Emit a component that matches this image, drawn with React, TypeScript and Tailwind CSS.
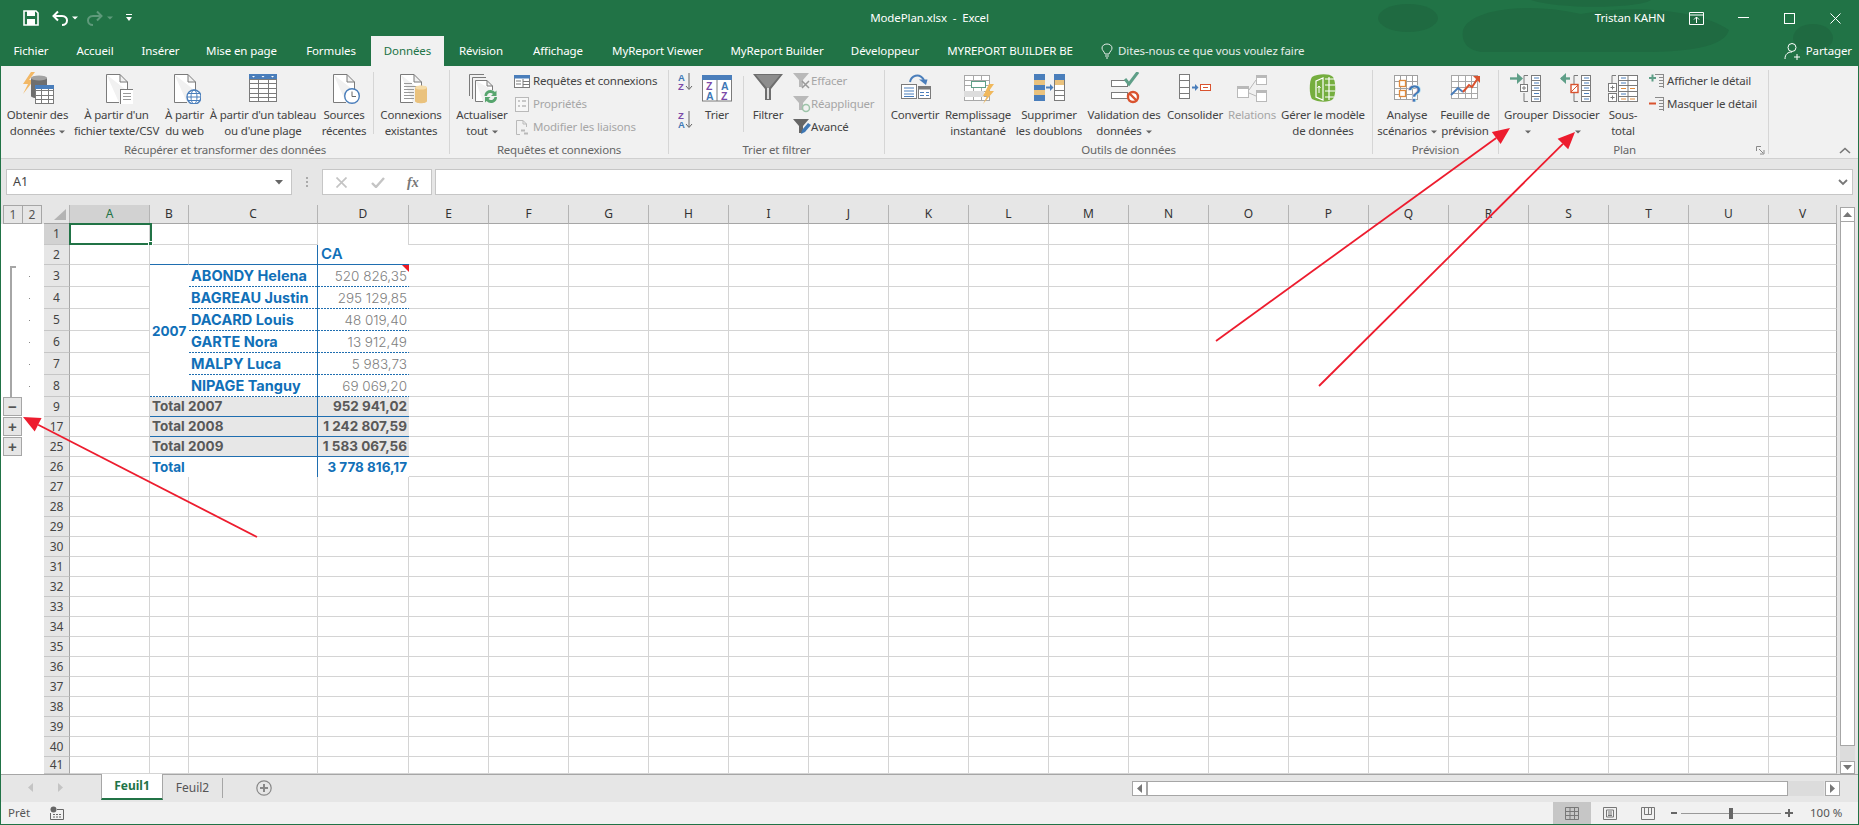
import React from "react";

const G = "#7b7b7b";
const B = "#4a7ebb";
const GOLD = "#eac27d";
const RED = "#d9532f";
const TEAL = "#5f9f88";
const DIM = "#b9b9b9";

const Svg = ({ s = 32, children }: { s?: number; children: React.ReactNode }) => (
  <svg width={s} height={s} viewBox={`0 0 ${s} ${s}`} className="shrink-0" fill="none">
    {children}
  </svg>
);

const Page = ({ c = G }: { c?: string }) => (
  <path d="M5.5 2.5H19L26.5 10V19M5.5 2.5V30.5H18M19 2.5V10H26.5" stroke={c} fill="#fff" />
);

const GridT = ({ x, y, w, h, cols, rows, c = G }: { x: number; y: number; w: number; h: number; cols: number; rows: number; c?: string }) => (
  <g stroke={c}>
    <rect x={x + 0.5} y={y + 0.5} width={w - 1} height={h - 1} fill="#fff" />
    {Array.from({ length: cols - 1 }).map((_, i) => (
      <path key={i} d={`M${Math.round(x + ((i + 1) * w) / cols) + 0.5} ${y}V${y + h}`} />
    ))}
    {Array.from({ length: rows - 1 }).map((_, i) => (
      <path key={i} d={`M${x} ${Math.round(y + ((i + 1) * h) / rows) + 0.5}H${x + w}`} />
    ))}
  </g>
);

const IcoGet = () => (
  <Svg>
    <path d="M9 0L1 12H6L1 22L12 8H7L13 0Z" fill="#f2b866" />
    <path d="M9 7c0-4 16-4 16 0v17c0 3-16 3-16 0z" fill="#6f6f6f" />
    <ellipse cx="17" cy="6" rx="8" ry="2.6" fill="#a2a2a2" />
    <GridT x={13} y={13} w={19} h={19} cols={3} rows={4} />
    <rect x="13" y="13" width="19" height="4" fill={B} />
  </Svg>
);
const IcoText = () => (
  <Svg>
    <Page />
    <rect x="19.5" y="17.5" width="13" height="15" fill="#fff" stroke={G} />
    <path d="M22 21.5h8M22 24.5h8M22 27.5h8" stroke="#999" />
  </Svg>
);
const IcoWeb = () => (
  <Svg>
    <Page />
    <circle cx="25" cy="25" r="7" fill="#fff" stroke={B} strokeWidth="1.4" />
    <ellipse cx="25" cy="25" rx="3" ry="7" stroke={B} />
    <path d="M18 25h14M19 21.5h12M19 28.5h12" stroke={B} />
  </Svg>
);
const IcoTable = () => (
  <Svg>
    <GridT x={2} y={2} w={28} h={28} cols={3} rows={6} />
    <rect x="2" y="2" width="28" height="5" fill={B} />
    <path d="M5 4l1.5 1.5L8 4zM14.5 4l1.5 1.5L17.5 4zM24 4l1.5 1.5L27 4z" fill="#fff" />
  </Svg>
);
const IcoRecent = () => (
  <Svg>
    <Page />
    <circle cx="24" cy="24" r="7.3" fill="#fff" stroke={B} strokeWidth="1.4" />
    <path d="M24 19.5V24.5H28" stroke="#666" />
  </Svg>
);
const IcoConn = () => (
  <Svg>
    <Page />
    <path d="M9 11.5h8M9 14.5h14M9 17.5h10M9 20.5h10M9 23.5h10M9 26.5h10" stroke="#999" />
    <path d="M20 16c0-3 12-3 12 0v13c0 3-12 3-12 0z" fill={GOLD} />
    <ellipse cx="26" cy="15.5" rx="6" ry="2" fill="#f5dca9" />
  </Svg>
);
const IcoRefresh = () => (
  <Svg>
    <path d="M3.5 24V2.5H18M6.5 27V5.5H20" stroke={G} />
    <path d="M9.5 8.5H21L26.5 14V18M9.5 8.5V29.5H17M21 8.5V14H26.5" stroke={G} fill="#fff" />
    <path d="M18.5 24a6 6 0 0 1 10.5-4l1.5-1.5V24h-5.5l2-2a3.5 3.5 0 0 0-6 2z" fill="#57a56e" />
    <path d="M31 25a6 6 0 0 1-10.5 4L19 30.5V25h5.5l-2 2a3.5 3.5 0 0 0 6-2z" fill="#57a56e" />
  </Svg>
);
const IcoTrier = () => (
  <Svg>
    <rect x="1.5" y="4" width="29" height="25" fill="#fff" stroke={G} />
    <rect x="1" y="3" width="30" height="5" fill={B} />
    <path d="M16 8V29" stroke={G} />
    <text x="5" y="18" fontSize="10.5" fontWeight="700" fill="#7b4aa8" fontFamily="Liberation Sans">Z</text>
    <text x="5" y="27.5" fontSize="10.5" fontWeight="700" fill="#3f78b5" fontFamily="Liberation Sans">A</text>
    <text x="20" y="18" fontSize="10.5" fontWeight="700" fill="#3f78b5" fontFamily="Liberation Sans">A</text>
    <text x="20" y="27.5" fontSize="10.5" fontWeight="700" fill="#7b4aa8" fontFamily="Liberation Sans">Z</text>
  </Svg>
);
const IcoFilter = () => (
  <Svg>
    <path d="M1 2H31L19 17V28H13V17Z" fill="#6e6e6e" />
    <path d="M4 3H28L17 16V27H15V16Z" fill="#8d8d8d" />
    <path d="M15 16V27h2V16z" fill="#ddd" />
  </Svg>
);
const IcoAZ = ({ rev }: { rev?: boolean }) => (
  <svg width="15" height="20" viewBox="0 0 15 20" fill="none" className="shrink-0">
    <text x="0" y="9" fontSize="9.5" fontWeight="700" fill={rev ? "#7b4aa8" : "#3f78b5"} fontFamily="Liberation Sans">{rev ? "Z" : "A"}</text>
    <text x="0" y="18" fontSize="9.5" fontWeight="700" fill={rev ? "#3f78b5" : "#7b4aa8"} fontFamily="Liberation Sans">{rev ? "A" : "Z"}</text>
    <path d="M11 1V17M8 14l3 3.5 3-3.5" stroke="#666" />
  </svg>
);
const IcoConvert = () => (
  <Svg>
    <rect x="2.5" y="12.5" width="15" height="14" fill="#fff" stroke={G} />
    <path d="M5 16h10M5 19h10M5 22h10M5 24.5h10" stroke={B} />
    <rect x="19.5" y="14.5" width="12" height="12" fill="#fff" stroke={G} />
    <rect x="19" y="14" width="13" height="3.5" fill={G} />
    <path d="M21 20.5h4M27 20.5h3M21 23.5h4M27 23.5h3" stroke={B} />
    <path d="M11 10C12 4 20 0 25 8" stroke={B} strokeWidth="2" />
    <path d="M20 7.5h8.5L27 13z" fill={B} />
  </Svg>
);
const IcoFlash = () => (
  <Svg>
    <GridT x={2} y={3} w={26} h={26} cols={3} rows={5} c="#a8a8a8" />
    <rect x="2" y="19" width="20" height="6" fill="#ddd" />
    <rect x="9.5" y="9.5" width="14" height="6" fill="#fff" stroke={TEAL} />
    <path d="M27 12L21 24H25L21 32L32 19H27L32 12Z" fill="#f0b85c" />
  </Svg>
);
const IcoDedup = () => (
  <Svg>
    <rect x="1" y="2" width="11" height="27" fill={B} />
    <rect x="1" y="8" width="11" height="5" fill={GOLD} />
    <rect x="1" y="18" width="11" height="5" fill={GOLD} />
    <rect x="21.5" y="2.5" width="10" height="26" fill="#fff" stroke={G} />
    <rect x="21" y="2" width="11" height="6" fill={B} />
    <rect x="22" y="8" width="9" height="5" fill={GOLD} />
    <path d="M22 18.5h10M22 23.5h10" stroke={G} />
    <path d="M13 15.5h5" stroke={B} strokeWidth="2" />
    <path d="M17 12l3.5 3.5L17 19z" fill={B} />
  </Svg>
);
const IcoValid = () => (
  <Svg>
    <rect x="3.5" y="8.5" width="16" height="6" fill="#fff" stroke={G} />
    <rect x="3.5" y="20.5" width="16" height="6" fill="#fff" stroke={G} />
    <path d="M17 7l4 5L30 0" stroke={TEAL} strokeWidth="3" />
    <circle cx="25" cy="25" r="5" fill="#fff" stroke={RED} strokeWidth="2.4" />
    <path d="M21.5 21.5l7 7" stroke={RED} strokeWidth="2.4" />
  </Svg>
);
const IcoConsol = () => (
  <Svg>
    <GridT x={0} y={2} w={11} h={25} cols={1} rows={4} />
    <rect x="21.5" y="12.5" width="10" height="6" fill="#fff" stroke={RED} />
    <path d="M24 15.5h5" stroke={RED} />
    <path d="M13 15.5h4" stroke={B} strokeWidth="2" />
    <path d="M16 12l3.5 3.5L16 19z" fill={B} />
  </Svg>
);
const IcoRel = () => (
  <Svg>
    <rect x="1.5" y="14.5" width="11" height="11" fill="#fff" stroke={DIM} />
    <rect x="1" y="14" width="12" height="3" fill={DIM} />
    <rect x="20.5" y="3.5" width="10" height="9" fill="#fff" stroke={DIM} />
    <rect x="20" y="3" width="11" height="3" fill={DIM} />
    <rect x="20.5" y="18.5" width="10" height="11" fill="#fff" stroke={DIM} />
    <rect x="20" y="18" width="11" height="3" fill={DIM} />
    <path d="M13 18L20 8M13 21l7 3" stroke={DIM} />
  </Svg>
);
const IcoModel = () => (
  <Svg>
    <path d="M5 5C10 2 22 1 26 5C29 9 29 24 26 27C22 31 10 30 5 27C2 23 2 9 5 5Z" fill="#75ae3f" />
    <path d="M9 9L16 6V28L9 25ZM18 7H28M18 13H28M18 19H28M18 25H27M22 5V28" stroke="#fff" strokeWidth="1.2" fill="none" />
    <path d="M12 21V14M10.5 16L12 14l1.5 2" stroke="#fff" />
  </Svg>
);
const IcoWhat = () => (
  <Svg>
    <GridT x={3} y={3} w={24} h={25} cols={4} rows={4} c="#a0a0a0" />
    <rect x="8.5" y="8.5" width="6" height="6" fill="#fff" stroke="#e08a3c" strokeWidth="1.3" />
    <rect x="8.5" y="18.5" width="6" height="6" fill="#fff" stroke="#e08a3c" strokeWidth="1.3" />
    <text x="16" y="30" fontSize="24" fontWeight="700" fill="#3f78b5" stroke="#f1f1f1" strokeWidth="0.5" fontFamily="Liberation Sans">?</text>
  </Svg>
);
const IcoForecast = () => (
  <Svg>
    <GridT x={2} y={3} w={27} h={24} cols={4} rows={4} c="#a8a8a8" />
    <path d="M2 23L9 16L14 20" stroke={B} strokeWidth="2" />
    <path d="M14 20L20 13L23 15L29 6" stroke={RED} strokeWidth="2" />
    <path d="M24 4h7v7z" fill={RED} />
  </Svg>
);
const IcoGroup = ({ un }: { un?: boolean }) => (
  <Svg>
    {un ? (
      <>
        <path d="M1 6.5H10" stroke={TEAL} strokeWidth="2.4" />
        <path d="M6 1L0 6.5L6 12z" fill={TEAL} />
      </>
    ) : (
      <>
        <path d="M0 6.5H9" stroke={TEAL} strokeWidth="2.4" />
        <path d="M7 1L13 6.5L7 12z" fill={TEAL} />
      </>
    )}
    <path d="M18 3.5H14V12.5M14 21V29.5H18" stroke={G} />
    {un ? (
      <>
        <rect x="11" y="12.5" width="7" height="8" fill="#fff" stroke={RED} strokeWidth="1.4" />
        <path d="M11 20L18 13" stroke={RED} />
      </>
    ) : (
      <>
        <rect x="10.5" y="12.5" width="7" height="7" fill="#fff" stroke={G} />
        <path d="M14 14V18M12 16h4" stroke={G} />
      </>
    )}
    <rect x="21.5" y="3.5" width="9" height="26" fill="#fff" stroke={G} />
    <path d="M21 8.5h10M21 13.5h10M21 18.5h10M21 24.5h10" stroke={G} />
    <path d="M24 6h5M24 11h5M24 16h5M24 21.5h5M24 27h5" stroke={B} />
  </Svg>
);
const IcoSub = () => (
  <Svg>
    <path d="M9 3.5H5V11M5 21V29.5H9" stroke={G} />
    <rect x="1.5" y="11.5" width="8" height="8" fill="#fff" stroke={G} />
    <path d="M5.5 13.5v4M3.5 15.5h4" stroke={G} />
    <rect x="1.5" y="21.5" width="8" height="8" fill="#fff" stroke={G} />
    <path d="M5.5 23.5v4M3.5 25.5h4" stroke={G} />
    <rect x="11.5" y="3.5" width="19" height="26" fill="#fff" stroke={G} />
    <path d="M11 8.5h20M11 13.5h20M11 19.5h20M11 24.5h20M21 3v26" stroke={G} />
    <path d="M14 6h5M14 11h5M14 22h5" stroke={B} />
    <path d="M14 16.5h5M23 16.5h5M14 27h5M23 27h5" stroke="#e08a3c" />
  </Svg>
);

const IcoQuery = () => (
  <Svg s={16}>
    <rect x="0.5" y="2.5" width="15" height="12" fill="#fff" stroke={G} />
    <rect x="0" y="2" width="16" height="3.5" fill={B} />
    <path d="M9 6v8M9 8.5h6M9 11.5h6M2 8h5M2 11h5" stroke={G} />
  </Svg>
);
const IcoProps = () => (
  <Svg s={16}>
    <rect x="1.5" y="1.5" width="13" height="14" fill="#f7f7f7" stroke={DIM} />
    <path d="M4 5h2M8 5h4M4 10h2M8 10h4" stroke={DIM} strokeWidth="1.5" />
  </Svg>
);
const IcoLinks = () => (
  <Svg s={16}>
    <path d="M2.5 1.5H9L12.5 5V8M2.5 1.5V15.5H6M9 1.5V5H12.5" stroke={DIM} />
    <path d="M7 11.5h4M10 14.5h4" stroke={DIM} strokeWidth="2" />
  </Svg>
);
const SmallFunnel = ({ c, s2 }: { c: string; s2?: React.ReactNode }) => (
  <Svg s={18}>
    <path d="M0 1H16L10 8V15H6V8Z" fill={c} />
    {s2}
  </Svg>
);
const IcoPlus = ({ minus }: { minus?: boolean }) => (
  <Svg s={16}>
    <path d="M6 1.5h9M10 4.5h5M10 7.5h5M10 10.5h5M10 13.5h5M14.5 1.5V15" stroke="#8a8a8a" />
    {minus ? (
      <path d="M0 7.5h7" stroke={RED} strokeWidth="2" />
    ) : (
      <path d="M0 5h7M3.5 1.5v7" stroke={TEAL} strokeWidth="2" />
    )}
  </Svg>
);

const Caret = ({ c = "#666" }: { c?: string }) => (
  <svg width="6" height="4" viewBox="0 0 6 4" className="inline-block ml-[4px] align-middle" fill={c}>
    <path d="M0 0.5H6L3 3.5Z" />
  </svg>
);

const Large = ({
  w,
  icon,
  l1,
  l2,
  caret,
  dim,
}: {
  w: string;
  icon: React.ReactNode;
  l1: string;
  l2?: string;
  caret?: boolean;
  dim?: boolean;
}) => (
  <div className={`${w} shrink-0 flex flex-col items-center pt-[2px] whitespace-nowrap leading-[16px] ${dim ? "text-[#a6a6a6]" : "text-[#444]"}`}>
    <div className="h-[32px] mb-[3px]">{icon}</div>
    <div>{l1}</div>
    <div className="h-[16px]">
      {l2}
      {caret ? <Caret /> : null}
    </div>
  </div>
);

const Small = ({ icon, label, dim, gap }: { icon: React.ReactNode; label: string; dim?: boolean; gap: string }) => (
  <div className={`h-[23px] flex items-center whitespace-nowrap ${gap} ${dim ? "text-[#a6a6a6]" : "text-[#444]"}`}>
    {icon}
    <span>{label}</span>
  </div>
);

const Group = ({ w, label, labelPad = "", children }: { w: string; label: string; labelPad?: string; children: React.ReactNode }) => (
  <div className={`${w} shrink-0 h-[84px] mt-[4px] border-r border-[#d6d6d6] flex flex-col`}>
    <div className="h-[72px] flex">{children}</div>
    <div className={`h-[12px] leading-[16px] text-center text-[#666] whitespace-nowrap ${labelPad}`}>{label}</div>
  </div>
);

const Ribbon = () => (
  <div className="h-[93px] bg-[#f1f1f1] border-b border-[#d0d0d0] flex text-[11.5px] tracking-[-0.2px] relative">
    <Group w="w-[449px]" label="Récupérer et transformer des données">
      <div className="w-[3px] shrink-0" />
      <Large w="w-[67px]" icon={<IcoGet />} l1="Obtenir des" l2="données" caret />
      <Large w="w-[91px]" icon={<IcoText />} l1="À partir d'un" l2="fichier texte/CSV" />
      <Large w="w-[45px]" icon={<IcoWeb />} l1="À partir" l2="du web" />
      <Large w="w-[112px]" icon={<IcoTable />} l1="À partir d'un tableau" l2="ou d'une plage" />
      <Large w="w-[50px]" icon={<IcoRecent />} l1="Sources" l2="récentes" />
      <div className="w-px h-[62px] mt-[2px] ml-[4px] mr-[3px] bg-[#d6d6d6] shrink-0" />
      <Large w="w-[68px]" icon={<IcoConn />} l1="Connexions" l2="existantes" />
    </Group>
    <Group w="w-[219px]" label="Requêtes et connexions">
      <div className="w-[2px] shrink-0" />
      <Large w="w-[60px]" icon={<IcoRefresh />} l1="Actualiser" l2="tout" caret />
      <div className="ml-[2px] -mt-[1px]">
        <Small gap="gap-[3px]" icon={<IcoQuery />} label="Requêtes et connexions" />
        <Small gap="gap-[3px]" icon={<IcoProps />} label="Propriétés" dim />
        <Small gap="gap-[3px]" icon={<IcoLinks />} label="Modifier les liaisons" dim />
      </div>
    </Group>
    <Group w="w-[216px]" label="Trier et filtrer">
      <div className="ml-[9px] w-[15px] pt-[2px] flex flex-col gap-[18px]">
        <IcoAZ />
        <IcoAZ rev />
      </div>
      <Large w="w-[32px] ml-[8px]" icon={<IcoTrier />} l1="Trier" />
      <div className="w-px h-[56px] mt-[6px] ml-[10px] bg-[#d6d6d6] shrink-0" />
      <Large w="w-[32px] ml-[8px]" icon={<IcoFilter />} l1="Filtrer" />
      <div className="ml-[9px] -mt-[1px]">
        <Small
          gap="gap-0"
          dim
          icon={<SmallFunnel c={DIM} s2={<path d="M9 9l7 7M16 9l-7 7" stroke="#999" strokeWidth="1.5" />} />}
          label="Effacer"
        />
        <Small
          gap="gap-0"
          dim
          icon={<SmallFunnel c={DIM} s2={<circle cx="13" cy="13" r="3.5" stroke="#9cc3a8" strokeWidth="1.5" />} />}
          label="Réappliquer"
        />
        <Small
          gap="gap-0"
          icon={<SmallFunnel c="#666" s2={<path d="M8 16l1-4 6-7 3 2-6 7z" fill="#3f78b5" />} />}
          label="Avancé"
        />
      </div>
    </Group>
    <Group w="w-[488px]" label="Outils de données">
      <div className="w-[3px] shrink-0" />
      <Large w="w-[54px]" icon={<IcoConvert />} l1="Convertir" />
      <Large w="w-[72px]" icon={<IcoFlash />} l1="Remplissage" l2="instantané" />
      <Large w="w-[70px]" icon={<IcoDedup />} l1="Supprimer" l2="les doublons" />
      <Large w="w-[80px]" icon={<IcoValid />} l1="Validation des" l2="données" caret />
      <Large w="w-[62px]" icon={<IcoConsol />} l1="Consolider" />
      <Large w="w-[52px]" icon={<IcoRel />} l1="Relations" dim />
      <Large w="w-[90px]" icon={<IcoModel />} l1="Gérer le modèle" l2="de données" />
    </Group>
    <Group w="w-[126px]" label="Prévision">
      <div className="w-[3px] shrink-0" />
      <Large w="w-[62px]" icon={<IcoWhat />} l1="Analyse" l2="scénarios" caret />
      <Large w="w-[54px]" icon={<IcoForecast />} l1="Feuille de" l2="prévision" />
    </Group>
    <Group w="w-[270px]" label="Plan" labelPad="pr-[18px]">
      <div className="w-[2px] shrink-0" />
      <Large w="w-[50px]" icon={<IcoGroup />} l1="Grouper" caret />
      <Large w="w-[50px]" icon={<IcoGroup un />} l1="Dissocier" caret />
      <Large w="w-[44px]" icon={<IcoSub />} l1="Sous-" l2="total" />
      <div className="ml-[4px] -mt-[1px]">
        <Small gap="gap-[2px]" icon={<IcoPlus />} label="Afficher le détail" />
        <Small gap="gap-[2px]" icon={<IcoPlus minus />} label="Masquer le détail" />
      </div>
    </Group>
    <svg className="absolute left-[1755px] top-[80px]" width="9" height="9" viewBox="0 0 9 9" fill="none" stroke="#888">
      <path d="M0.5 0.5H5M0.5 0.5V5M3 3l4 4M8 4v4H4" />
    </svg>
    <svg className="absolute left-[1838px] top-[81px]" width="12" height="8" viewBox="0 0 12 8" fill="none" stroke="#777" strokeWidth="1.6">
      <path d="M1 6L6 1.5L11 6" />
    </svg>
  </div>
);

const Tab = ({ w, label, active }: { w: string; label: string; active?: boolean }) => (
  <div className={`${w} shrink-0 h-full flex items-center justify-center whitespace-nowrap ${active ? "bg-[#f1f1f1] text-[#217346]" : "text-white"}`}>
    {label}
  </div>
);

const Header = () => (
  <div className="relative bg-[#217346] h-[66px] text-white text-[11.5px] tracking-[-0.1px]">
    <svg className="absolute left-0 top-0" width="1857" height="66" viewBox="0 0 1857 66" fill="#1f6a41">
      <ellipse cx="1407" cy="18" rx="30" ry="14" />
      <path d="M1462 30C1470 8 1530 2 1580 14C1630 4 1700 10 1728 30C1724 44 1700 52 1640 52H1480C1466 50 1460 42 1462 30Z" />
      <ellipse cx="1812" cy="38" rx="20" ry="14" />
      <path d="M1530 0H1650C1640 8 1560 10 1530 0Z" />
    </svg>
    <div className="relative h-[36px] grid grid-cols-[1fr_auto_1fr] items-center">
      <div className="flex items-center">
        <svg className="ml-[22px]" width="16" height="16" viewBox="0 0 16 16" fill="none">
          <path d="M1 1H13L15 3V15H1Z" stroke="#fff" strokeWidth="1.6" />
          <rect x="4" y="1" width="8" height="5" fill="#fff" />
          <rect x="4" y="9" width="8" height="6" fill="#fff" />
        </svg>
        <svg className="ml-[13px]" width="16" height="16" viewBox="0 0 16 16" fill="none">
          <path d="M3 6H10C14 6 15 9 15 10.5C15 13 13 15 10 15" stroke="#fff" strokeWidth="2" />
          <path d="M6 1.5L1.5 6L6 10.5" stroke="#fff" strokeWidth="2" />
        </svg>
        <Caret c="#fff" />
        <svg className="ml-[9px]" width="16" height="16" viewBox="0 0 16 16" fill="none">
          <path d="M13 6H6C2 6 1 9 1 10.5C1 13 3 15 6 15" stroke="#5f9a7b" strokeWidth="2" />
          <path d="M10 1.5L14.5 6L10 10.5" stroke="#5f9a7b" strokeWidth="2" />
        </svg>
        <Caret c="#5f9a7b" />
        <svg className="ml-[13px]" width="6" height="8" viewBox="0 0 6 8" fill="#fff">
          <path d="M0 0H6V1H0ZM0 3H6L3 7Z" />
        </svg>
      </div>
      <div className="text-[11.5px]">ModePlan.xlsx&nbsp; -&nbsp; Excel</div>
      <div className="flex items-center justify-end">
        <span className="text-[11.5px] mr-[24px]">Tristan KAHN</span>
        <svg className="mr-[34px]" width="15" height="13" viewBox="0 0 15 13" fill="none" stroke="#fff">
          <path d="M0.5 0.5H14.5V12.5H0.5ZM0.5 3H14.5M7.5 11V5M5 7.5L7.5 5L10 7.5" />
        </svg>
        <svg className="mr-[35px]" width="11" height="2" viewBox="0 0 11 2" fill="#fff">
          <rect width="11" height="1" />
        </svg>
        <svg className="mr-[35px]" width="11" height="11" viewBox="0 0 11 11" fill="none" stroke="#fff">
          <rect x="0.5" y="0.5" width="10" height="10" />
        </svg>
        <svg className="mr-[17px]" width="11" height="11" viewBox="0 0 11 11" fill="none" stroke="#fff">
          <path d="M0.5 0.5L10.5 10.5M10.5 0.5L0.5 10.5" />
        </svg>
      </div>
    </div>
    <div className="relative h-[30px] flex items-center">
      <Tab w="w-[60px]" label="Fichier" />
      <Tab w="w-[68px]" label="Accueil" />
      <Tab w="w-[63px]" label="Insérer" />
      <Tab w="w-[99px]" label="Mise en page" />
      <Tab w="w-[80px]" label="Formules" />
      <Tab w="w-[73px]" label="Données" active />
      <Tab w="w-[74px]" label="Révision" />
      <Tab w="w-[80px]" label="Affichage" />
      <Tab w="w-[119px]" label="MyReport Viewer" />
      <Tab w="w-[120px]" label="MyReport Builder" />
      <Tab w="w-[96px]" label="Développeur" />
      <Tab w="w-[154px]" label="MYREPORT BUILDER BE" />
      <svg className="ml-[14px] mr-[5px]" width="12" height="16" viewBox="0 0 12 16" fill="none" stroke="#e4ece8">
        <path d="M4 11C3 8 1 7.5 1 5C1 2.5 3.5 1 6 1C8.5 1 11 2.5 11 5C11 7.5 9 8 8 11ZM4 13H8M5 15H7" />
      </svg>
      <span className="text-[#e4ece8] whitespace-nowrap">Dites-nous ce que vous voulez faire</span>
      <div className="ml-auto flex items-center gap-[4px] mr-[6px]">
        <svg width="18" height="18" viewBox="0 0 18 18" fill="none" stroke="#fff">
          <circle cx="8" cy="5.5" r="4" />
          <path d="M1 17C1 12 4 10 8 10M13 12V18M10 15H16" />
        </svg>
        <span>Partager</span>
      </div>
    </div>
  </div>
);

const FormulaBar = () => (
  <div className="h-[46px] pt-[10px] flex items-start bg-[#e6e6e6]">
    <div className="ml-[5px] w-[286px] h-[26px] bg-white border border-[#c6c6c6] flex items-center justify-between pl-[6px] pr-[8px] text-[12.5px] text-[#444]">
      <span>A1</span>
      <svg width="8" height="5" viewBox="0 0 8 5" fill="#666">
        <path d="M0 0H8L4 4.5Z" />
      </svg>
    </div>
    <div className="w-[2px] h-[10px] ml-[14px] mt-[8px] border-l-2 border-dotted border-[#aaa]" />
    <div className="ml-[14px] w-[110px] h-[26px] bg-white border border-[#c6c6c6] flex items-center">
      <svg className="ml-[13px]" width="11" height="11" viewBox="0 0 11 11" fill="none" stroke="#c4c4c4" strokeWidth="1.7">
        <path d="M0.5 0.5L10.5 10.5M10.5 0.5L0.5 10.5" />
      </svg>
      <svg className="ml-[24px]" width="14" height="11" viewBox="0 0 14 11" fill="none" stroke="#c4c4c4" strokeWidth="2.4">
        <path d="M1 6L5 10L13 1" />
      </svg>
      <span className="ml-[22px] text-[14px] italic font-bold text-[#777] font-['Liberation_Serif',serif]">fx</span>
    </div>
    <div className="ml-[3px] w-[1418px] h-[26px] bg-white border border-[#c6c6c6] flex items-center justify-end pr-[4px]">
      <svg width="10" height="7" viewBox="0 0 10 7" fill="none" stroke="#777" strokeWidth="1.8">
        <path d="M1 1L5 5L9 1" />
      </svg>
    </div>
  </div>
);

const LETTERS = "E F G H I J K L M N O P Q R S T U".split(" ");
const ROWS = [1, 2, 3, 4, 5, 6, 7, 8, 9, 17, 25, 26, ...Array.from({ length: 15 }, (_, i) => 27 + i)];
const GRID = "border-r border-b border-[#d4d4d4]";
const NAMES: Record<number, [string, string]> = {
  3: ["ABONDY Helena", "520 826,35"],
  4: ["BAGREAU Justin", "295 129,85"],
  5: ["DACARD Louis", "48 019,40"],
  6: ["GARTE Nora", "13 912,49"],
  7: ["MALPY Luca", "5 983,73"],
  8: ["NIPAGE Tanguy", "69 069,20"],
};
const TOTALS: Record<number, [string, string]> = {
  9: ["Total 2007", "952 941,02"],
  17: ["Total 2008", "1 242 807,59"],
  25: ["Total 2009", "1 583 067,56"],
};
const TF = "font-['Inter',sans-serif] whitespace-nowrap flex items-center";
const DOT = "bg-[repeating-linear-gradient(90deg,#1f6eb0_0_2px,transparent_2px_3px)] bg-[length:100%_1px] bg-bottom bg-no-repeat";

const OutBtn = ({ label }: { label: string }) => (
  <div className="ml-[2px] w-[19px] h-[19px] bg-[#e6e6e6] border border-[#a6a6a6] flex items-center justify-center text-[15px] leading-none font-bold text-[#555] font-['Liberation_Sans',sans-serif]">
    {label}
  </div>
);

const OutlineCell = ({ r }: { r: number }) => {
  if (r >= 3 && r <= 8)
    return (
      <div className="bg-white flex items-center">
        <div className={`ml-[9px] w-[6px] self-stretch border-l-2 border-[#a6a6a6] ${r === 3 ? "border-t-2 mt-px" : ""}`} />
        <div className="ml-[13px] w-px h-px bg-[#888]" />
      </div>
    );
  if (r === 9) return <div className="bg-white"><OutBtn label="−" /></div>;
  if (r === 17 || r === 25) return <div className="bg-white"><OutBtn label="+" /></div>;
  return <div className="bg-white" />;
};

const Row = ({ r }: { r: number }) => {
  let cells: React.ReactNode;
  if (r === 1) {
    cells = (
      <>
        <div className={GRID} />
        <div className={GRID} />
        <div className="border-r border-[#d4d4d4]" />
      </>
    );
  } else if (r === 2) {
    cells = (
      <>
        <div className="border-r border-[#d4d4d4] border-b border-b-[#1f6eb0]" />
        <div className="border-r border-[#1f6eb0] border-b" />
        <div className={`border-b border-[#1f6eb0] pl-[3px] text-[#1170b8] font-semibold text-[15px] ${TF}`}>CA</div>
      </>
    );
  } else if (NAMES[r]) {
    cells = (
      <>
        {r === 3 ? (
          <div className={`row-span-6 ${DOT} pl-[2px] text-[#1170b8] text-[13.5px] font-bold ${TF}`}>2007</div>
        ) : null}
        <div className={`border-r border-r-[#1f6eb0] ${DOT} pl-[2px] text-[#1170b8] text-[14.5px] font-bold ${TF}`}>
          {NAMES[r][0]}
        </div>
        <div className={`relative ${DOT} justify-end pr-[2px] text-[#808080] text-[13.5px] font-light ${TF}`}>
          {NAMES[r][1]}
          {r === 3 ? (
            <svg className="absolute right-0 top-0" width="7" height="7" viewBox="0 0 7 7" fill="#ee1c25">
              <path d="M0 0H7V7Z" />
            </svg>
          ) : null}
        </div>
      </>
    );
  } else if (TOTALS[r]) {
    cells = (
      <>
        <div className={`col-span-2 bg-[#e7e7e7] border-r border-b border-[#1f6eb0] pl-[2px] text-[#595959] text-[13.5px] font-bold ${TF}`}>
          {TOTALS[r][0]}
        </div>
        <div className={`bg-[#e7e7e7] border-b border-[#1f6eb0] justify-end pr-[2px] text-[#595959] text-[13.5px] font-bold ${TF}`}>
          {TOTALS[r][1]}
        </div>
      </>
    );
  } else if (r === 26) {
    cells = (
      <>
        <div className={`col-span-2 border-r border-[#1f6eb0] pl-[2px] text-[#1170b8] text-[13.5px] font-bold ${TF}`}>Total</div>
        <div className={`justify-end pr-[2px] text-[#1170b8] text-[13.5px] font-bold ${TF}`}>3 778 816,17</div>
      </>
    );
  } else {
    cells = (
      <>
        <div className={GRID} />
        <div className={GRID} />
        <div className={GRID} />
      </>
    );
  }
  return (
    <>
      <OutlineCell r={r} />
      <div className={`border-r border-b border-r-[#a6a6a6] border-b-[#c6c6c6] flex items-center justify-center text-[#444] ${r === 1 ? "bg-[#d2d2d2]" : "bg-[#e6e6e6]"}`}>
        {r}
      </div>
      <div className={`relative ${GRID}`}>
        {r === 1 ? (
          <div className="absolute -left-px -top-px w-[83px] h-[22px] border-2 border-[#217346]">
            <div className="absolute -right-[3px] -bottom-[3px] w-[5px] h-[5px] bg-[#217346] border border-white" />
          </div>
        ) : null}
      </div>
      {cells}
      {LETTERS.map((c) => (
        <div key={c} className={GRID} />
      ))}
      <div className="border-r border-b border-b-[#d4d4d4] border-r-[#a6a6a6]" />
    </>
  );
};

const ColHead = ({ l, active }: { l: string; active?: boolean }) => (
  <div className={`border-r border-b border-r-[#b4b4b4] border-b-[#a6a6a6] flex items-center justify-center ${active ? "bg-[#d2d2d2] text-[#217346]" : "bg-[#e6e6e6] text-[#333]"}`}>
    {l}
  </div>
);

const Sheet = () => (
  <div className="flex h-[569px] text-[12px]">
    <div className="grid grid-cols-[43px_26px_80px_39px_129px_91px_repeat(17,80px)_68px] grid-rows-[19px_21px_20px_repeat(6,22px)_repeat(18,20px)_17px] bg-white overflow-hidden">
      <div className="bg-[#e6e6e6] flex pl-[2px]">
        <div className="w-[20px] h-[19px] border border-[#a6a6a6] flex items-center justify-center text-[#555]">1</div>
        <div className="w-[19px] h-[19px] border border-l-0 border-[#a6a6a6] flex items-center justify-center text-[#555]">2</div>
      </div>
      <div className="bg-[#e6e6e6] border-r border-b border-r-[#b4b4b4] border-b-[#a6a6a6] flex items-end justify-end pr-[3px] pb-[3px]">
        <svg width="12" height="11" viewBox="0 0 12 11" fill="#b4b4b4">
          <path d="M12 0V11H0Z" />
        </svg>
      </div>
      <ColHead l="A" active />
      <ColHead l="B" />
      <ColHead l="C" />
      <ColHead l="D" />
      {LETTERS.map((c) => (
        <ColHead key={c} l={c} />
      ))}
      <ColHead l="V" />
      {ROWS.map((r) => (
        <Row key={r} r={r} />
      ))}
    </div>
    <div className="w-[20px] bg-[#e6e6e6] pt-[2px] pl-[3px] flex flex-col">
      <div className="w-[15px] h-[15px] bg-white border border-[#a6a6a6] flex items-center justify-center shrink-0">
        <svg width="9" height="5" viewBox="0 0 9 5" fill="#777"><path d="M0 5L4.5 0L9 5Z" /></svg>
      </div>
      <div className="w-[15px] h-[524px] bg-white border-x border-b border-[#a6a6a6] shrink-0" />
      <div className="w-[15px] h-[15px] bg-[#dcdcdc] shrink-0" />
      <div className="w-[15px] h-[13px] bg-white border border-[#a6a6a6] flex items-center justify-center shrink-0">
        <svg width="9" height="5" viewBox="0 0 9 5" fill="#777"><path d="M0 0L4.5 5L9 0Z" /></svg>
      </div>
    </div>
  </div>
);

const TabsBar = () => (
  <div className="h-[28px] bg-[#e6e6e6] border-t border-[#a6a6a6] flex items-start text-[12px]">
    <svg className="ml-[27px] mt-[8px]" width="5" height="9" viewBox="0 0 5 9" fill="#c4c4c4"><path d="M5 0V9L0 4.5Z" /></svg>
    <svg className="ml-[25px] mt-[8px]" width="5" height="9" viewBox="0 0 5 9" fill="#c4c4c4"><path d="M0 0V9L5 4.5Z" /></svg>
    <div className="ml-[38px] -mt-px w-[62px] h-[26px] bg-white border-x border-[#a6a6a6] border-b-2 border-b-[#217346] flex items-center justify-center font-bold text-[#217346]">
      Feuil1
    </div>
    <div className="w-[59px] h-[25px] flex items-center justify-center text-[#555]">Feuil2</div>
    <div className="w-px h-[20px] mt-[3px] bg-[#a6a6a6]" />
    <svg className="ml-[33px] mt-[5px]" width="16" height="16" viewBox="0 0 16 16" fill="none" stroke="#888" strokeWidth="1.2">
      <circle cx="8" cy="8" r="7.2" />
      <path d="M8 4V12M4 8H12" strokeWidth="2" />
    </svg>
    <div className="ml-auto mt-[6px] flex items-start">
      <div className="w-[15px] h-[15px] bg-white border border-[#a6a6a6] flex items-center justify-center">
        <svg width="5" height="9" viewBox="0 0 5 9" fill="#777"><path d="M5 0V9L0 4.5Z" /></svg>
      </div>
      <div className="w-[641px] h-[15px] bg-white border border-[#a6a6a6]" />
      <div className="w-[36px] h-[15px] bg-[#dcdcdc] mr-[1px]" />
      <div className="w-[15px] h-[15px] bg-white border border-[#a6a6a6] flex items-center justify-center mr-[18px]">
        <svg width="5" height="9" viewBox="0 0 5 9" fill="#777"><path d="M0 0V9L5 4.5Z" /></svg>
      </div>
    </div>
  </div>
);

const StatusBar = () => (
  <div className="h-[22px] bg-[#f1f1f1] flex items-center text-[11.5px] text-[#555]">
    <span className="ml-[7px]">Prêt</span>
    <svg className="ml-[20px]" width="14" height="14" viewBox="0 0 14 14" fill="none">
      <circle cx="3.5" cy="3.5" r="3" fill="#666" />
      <path d="M7 3.5H13.5V13.5H0.5V7" stroke="#666" />
      <path d="M3 8.5h2M6 8.5h2M9 8.5h2M3 11h2M6 11h2M9 11h2" stroke="#666" />
    </svg>
    <div className="ml-auto h-full w-[38px] bg-[#c6c6c6] flex items-center justify-center">
      <svg width="14" height="13" viewBox="0 0 14 13" fill="none" stroke="#777">
        <path d="M0.5 0.5H13.5V12.5H0.5ZM5 0V13M9.5 0V13M0 4.5H14M0 8.5H14" />
      </svg>
    </div>
    <div className="w-[38px] flex justify-center">
      <svg width="14" height="13" viewBox="0 0 14 13" fill="none" stroke="#777">
        <path d="M0.5 0.5H13.5V12.5H0.5ZM3.5 3V10H10.5V3ZM5 5H9M5 7H9M5 8.5H9" />
      </svg>
    </div>
    <div className="w-[38px] flex justify-center">
      <svg width="14" height="13" viewBox="0 0 14 13" fill="none" stroke="#777">
        <path d="M0.5 0.5H13.5V12.5H0.5ZM3.5 0V7.5H10.5V0M7.5 0V7.5" />
      </svg>
    </div>
    <div className="ml-[4px] w-[6px] h-[2px] bg-[#666]" />
    <div className="ml-[4px] w-[100px] h-px bg-[#999] relative">
      <div className="absolute left-[48px] -top-[5px] w-[4px] h-[11px] bg-[#666]" />
    </div>
    <svg className="ml-[4px]" width="8" height="8" viewBox="0 0 8 8" fill="#666"><path d="M3 0H5V3H8V5H5V8H3V5H0V3H3Z" /></svg>
    <span className="ml-[17px] mr-[18px] w-[30px] whitespace-nowrap">100 %</span>
  </div>
);

const Arrow = ({ x1, y1, x2, y2 }: { x1: number; y1: number; x2: number; y2: number }) => {
  const a = Math.atan2(y2 - y1, x2 - x1);
  const L = 17;
  const W = 7.5;
  const bx = x2 - L * Math.cos(a);
  const by = y2 - L * Math.sin(a);
  const px = -Math.sin(a) * W;
  const py = Math.cos(a) * W;
  return (
    <>
      <line x1={x1} y1={y1} x2={bx} y2={by} stroke="#ed1c2e" strokeWidth="1.8" />
      <polygon points={`${x2},${y2} ${bx + px},${by + py} ${bx - px},${by - py}`} fill="#ed1c2e" />
    </>
  );
};

export default function App() {
  return (
    <div className="relative w-[1859px] h-[825px] overflow-hidden border-x border-b border-[#217346] bg-[#e6e6e6] font-['Noto_Sans',sans-serif]">
      <Header />
      <Ribbon />
      <FormulaBar />
      <Sheet />
      <TabsBar />
      <StatusBar />
      <svg className="absolute left-0 top-0 pointer-events-none" width="1859" height="825" viewBox="0 0 1859 825">
        <Arrow x1={1215} y1={341} x2={1509} y2={128} />
        <Arrow x1={1318} y1={386} x2={1574} y2={132} />
        <Arrow x1={256} y1={537} x2={22} y2={417} />
      </svg>
    </div>
  );
}
